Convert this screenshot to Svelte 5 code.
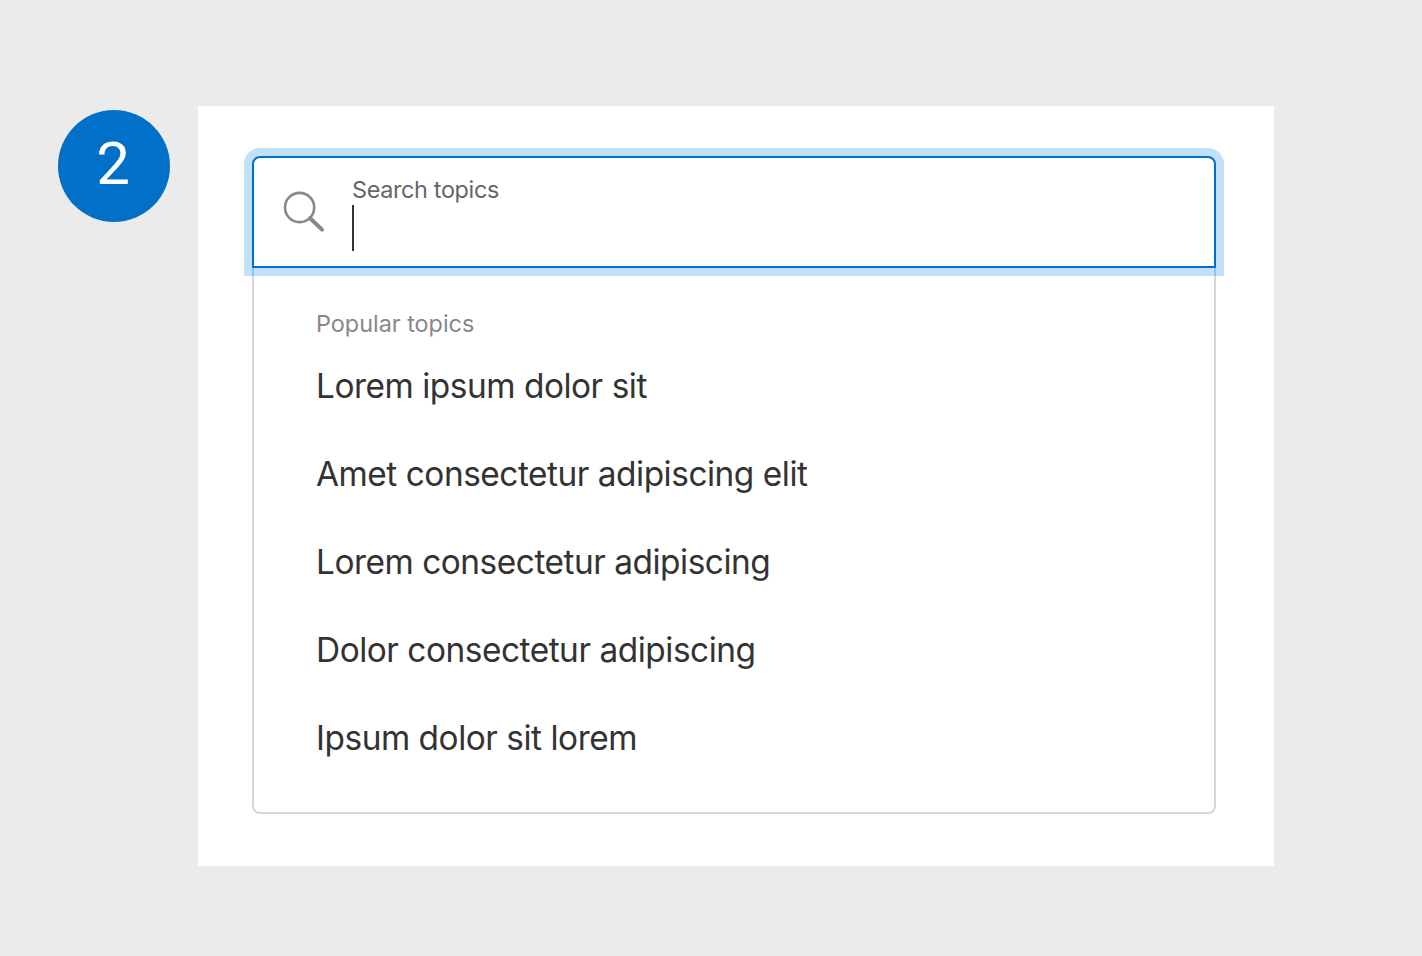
<script lang="ts">
  let step: number = 2;
  let label: string = "Search topics";
  let heading: string = "Popular topics";

  const topics: string[] = [
    "Lorem ipsum dolor sit",
    "Amet consectetur adipiscing elit",
    "Lorem consectetur adipiscing",
    "Dolor consectetur adipiscing",
    "Ipsum dolor sit lorem",
  ];
</script>

<main class="page">
  <div class="step"><span>{step}</span></div>

  <section class="panel">
    <!-- Search field -->
    <div class="search-field">
      <svg class="search-icon" width="44" height="44" viewBox="0 0 44 44" aria-hidden="true">
        <circle cx="17.6" cy="17.5" r="14.6" />
        <path d="M28.2 28.2 L40 39.6" />
      </svg>
      <div class="entry">
        <span class="label">{label}</span>
        <span class="caret"></span>
      </div>
    </div>

    <!-- Suggestions -->
    <div class="suggestions">
      <h2>{heading}</h2>
      <ul>
        {#each topics as topic}
          <li><span>{topic}</span></li>
        {/each}
      </ul>
    </div>
  </section>
</main>

<style>
  :global(body) {
    background: #ebebeb;
  }

  .page {
    display: flex;
    align-items: flex-start;
    gap: 28px;
    box-sizing: border-box;
    height: 956px;
    padding: 106px 148px 90px 58px;
    font-family: Inter, "Liberation Sans", sans-serif;
    color: #333;
  }

  .step {
    display: flex;
    align-items: center;
    justify-content: center;
    flex: none;
    width: 112px;
    height: 112px;
    margin-top: 4px;
    border-radius: 50%;
    background: #0070c9;
    color: #fff;
    font-family: Roboto, sans-serif;
    font-size: 60px;
    line-height: 72px;
  }

  .step span {
    padding: 0 2px 5px 0;
  }

  .panel {
    flex: 1;
    box-sizing: border-box;
    height: 760px;
    padding: 50px 58px 52px 54px;
    background: #fff;
  }

  /* Search field */
  .search-field {
    position: relative;
    z-index: 1;
    display: flex;
    box-sizing: border-box;
    height: 112px;
    padding: 18px 28px 0;
    border: 2px solid #0070c9;
    border-radius: 8px 8px 0 0;
    background: #fff;
    box-shadow: 0 0 0 8px rgba(0, 125, 250, 0.24);
  }

  .search-icon {
    margin-top: 14px;
    fill: none;
    stroke: #888;
    stroke-linecap: round;
  }

  .search-icon circle {
    stroke-width: 2.6;
  }

  .search-icon path {
    stroke-width: 4;
  }

  .entry {
    display: flex;
    flex-direction: column;
    margin-left: 26px;
  }

  .label {
    height: 29px;
    color: #666;
    font-size: 23.4px;
    line-height: 28px;
    letter-spacing: -0.34px;
  }

  .caret {
    width: 2px;
    height: 46px;
    background: #333;
  }

  /* Suggestions */
  .suggestions {
    box-sizing: border-box;
    height: 546px;
    padding: 42px 62px 0;
    border: 2px solid #d6d6d6;
    border-top: 0;
    border-radius: 0 0 8px 8px;
  }

  h2 {
    margin: 0;
    color: #888;
    font-size: 23.4px;
    font-weight: 400;
    line-height: 28px;
    letter-spacing: 0;
  }

  ul {
    margin: 4px 0 0;
    padding: 0;
    list-style: none;
  }

  li {
    display: flex;
    align-items: center;
    height: 88px;
    font-size: 33.4px;
    letter-spacing: -0.47px;
  }
</style>
